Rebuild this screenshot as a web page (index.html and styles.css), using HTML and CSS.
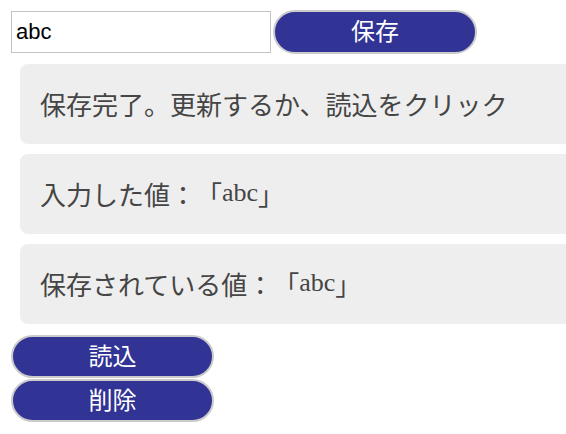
FILE: index.html
```html
<!DOCTYPE html>
<html lang="ja">
<head>
<meta charset="utf-8">
<link rel="stylesheet" href="styles.css">
</head>
<body>
<div class="top-row">
  <input class="text-input" type="text" value="abc">
  <button class="btn btn-wide">保存</button>
</div>
<div class="card">保存完了。更新するか、読込をクリック</div>
<div class="card">入力した値：「<span class="latin">abc</span>」</div>
<div class="card">保存されている値：「<span class="latin">abc</span>」</div>
<div class="btn-col">
  <button class="btn">読込</button>
  <button class="btn">削除</button>
</div>
</body>
</html>
```
FILE: styles.css
```css
html, body {
  margin: 0;
  padding: 0;
  background: #ffffff;
  overflow: hidden;
}
body {
  padding: 10px 0 0 11px;
  font-family: "Noto Sans CJK JP", sans-serif;
  text-spacing-trim: space-all;
}
.top-row {
  display: flex;
  align-items: center;
  gap: 2px;
  height: 43px;
}
.text-input {
  box-sizing: border-box;
  width: 260px;
  height: 42px;
  margin: 0;
  border: 1px solid #c3c3c3;
  padding: 0 4px;
  font-family: "Liberation Sans", "Noto Sans CJK JP", sans-serif;
  font-size: 22px;
  color: #000;
  outline: none;
}
.btn {
  box-sizing: border-box;
  width: 203px;
  height: 43px;
  margin: 0;
  padding: 0 0 4px;
  border: 2px solid #cbcbcb;
  border-radius: 22px;
  background: #313395;
  color: #ffffff;
  font-family: "Noto Sans CJK JP", sans-serif;
  font-size: 24px;
  line-height: 1;
}
.btn-wide {
  width: 204px;
  height: 44px;
}
.card {
  box-sizing: border-box;
  height: 80px;
  margin: 11px 0 0 9px;
  padding: 0 20px 2px;
  display: flex;
  align-items: center;
  background: #eeeeee;
  border-radius: 8px 0 0 8px;
  color: #454545;
  font-size: 26px;
  white-space: nowrap;
  overflow: hidden;
  text-spacing-trim: space-all;
}
.card + .card {
  margin-top: 10px;
}
.latin {
  font-family: "Liberation Serif", serif;
  font-size: 26px;
}
.btn-col {
  display: flex;
  flex-direction: column;
  gap: 1px;
  margin-top: 11px;
}
```
